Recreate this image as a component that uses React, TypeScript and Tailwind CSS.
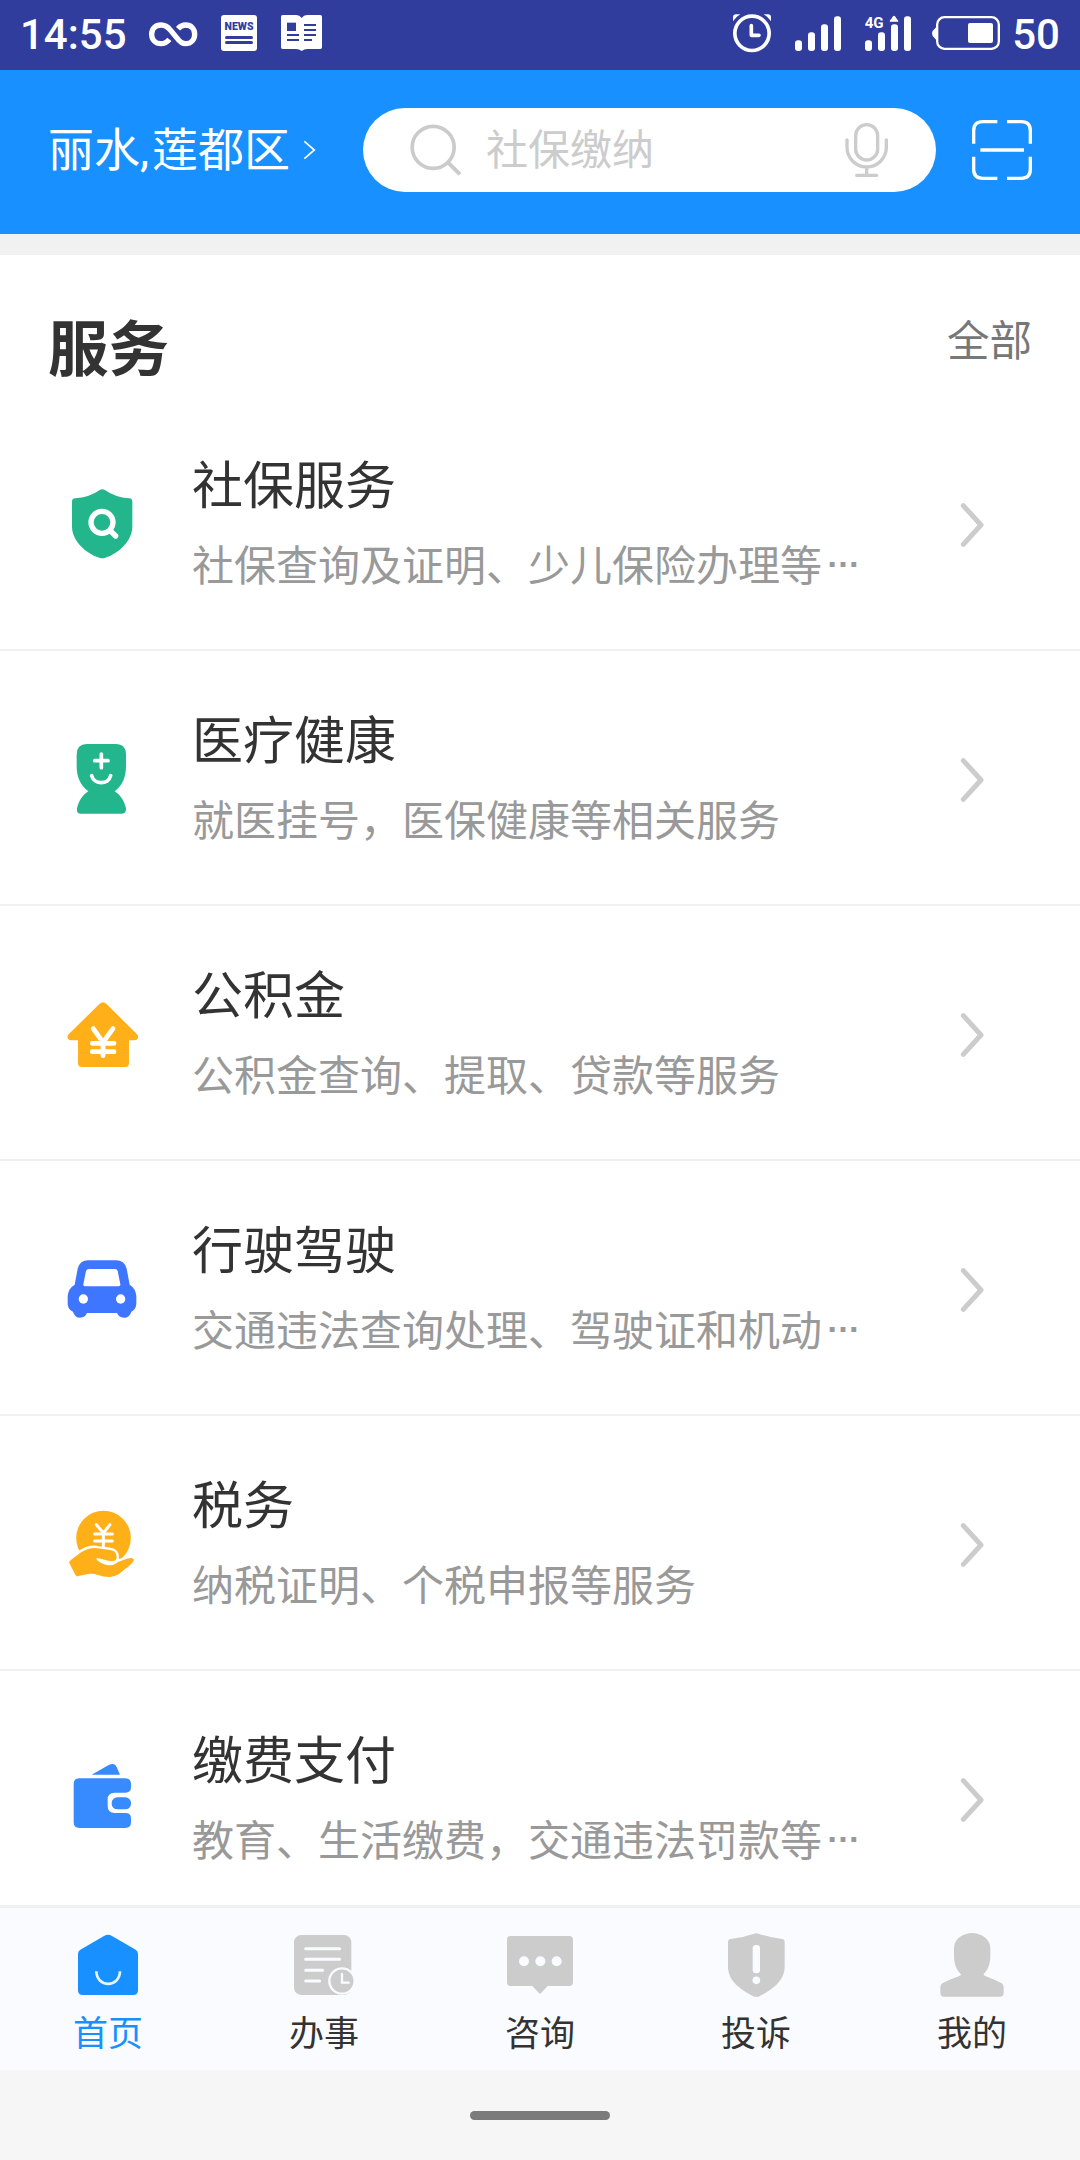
import type { ReactNode } from "react";

const InfinityIcon = () => (
  <svg className="h-[26px] w-[50px]" viewBox="444 62 150 78" fill="none" stroke="#fff" strokeWidth="16">
    <path d="M508 117C500 127 492 130 483 130C466 130 455 118 455 101.500C455 85 467 74 483 74C496 74 504 80 512 90L531 113C538 123 546 130 557 130C573 130 584 118 584 101.500C584 85 573 74 557 74C548 74 540 78 534 85" />
  </svg>
);

const NewsIcon = () => (
  <span className="flex h-9 w-9 flex-col items-center rounded-[3px] bg-white pt-[6px]">
    <span className="font-[Roboto] text-[10.5px] leading-[11px] font-black text-[#303d9d]">NEWS</span>
    <span className="mt-[4px] h-[3px] w-7 rounded-full bg-[#303d9d]" />
    <span className="mt-[2px] h-[3px] w-7 rounded-full bg-[#303d9d]" />
  </span>
);

const BookIcon = () => (
  <svg className="h-9 w-[41px]" viewBox="843 45 123 108">
    <path fill="#fff" d="M848 45H889Q899 45 905 54Q911 45 921 45H961Q966 45 966 50V142Q966 147 961 147H922Q912 147 905 153Q898 147 888 147H848Q843 147 843 142V50Q843 45 848 45Z" />
    <path fill="#303d9d" d="M861 68h27v25h-27z" />
    <path stroke="#303d9d" strokeWidth="6" d="M861 105H897M861 120H897M912 75H948M912 90H948M912 105H948M912 120H936" />
  </svg>
);

const AlarmIcon = () => (
  <svg className="h-[39px] w-10" viewBox="96 41 120 117" fill="none" stroke="#fff">
    <circle cx="156" cy="99" r="51.500" strokeWidth="11" />
    <path strokeWidth="11" strokeLinecap="round" strokeLinejoin="round" d="M154 76V105H177" />
    <path fill="#fff" stroke="none" d="M99 63V51Q99 42 108 42H121Q107 50 99 63ZM213 63V51Q213 42 204 42H191Q205 50 213 63Z" />
  </svg>
);

const SignalIcon = () => (
  <svg className="h-[36px] w-[46px]" viewBox="285 43 138 108" fill="#fff">
    <rect x="285" y="119" width="21" height="32" rx="9" />
    <rect x="324" y="95" width="21" height="56" rx="9" />
    <rect x="363" y="71" width="21" height="80" rx="9" />
    <rect x="402" y="47" width="21" height="104" rx="9" />
  </svg>
);

const Signal4GIcon = () => (
  <svg className="h-[36px] w-[46px]" viewBox="495 43 138 108" fill="#fff">
    <rect x="495" y="119" width="21" height="32" rx="9" />
    <rect x="534" y="95" width="21" height="56" rx="9" />
    <rect x="573" y="71" width="21" height="80" rx="9" />
    <rect x="612" y="47" width="21" height="104" rx="9" />
    <path d="M569 63Q569 59 573 56L579 47Q582 43 585 47L591 56Q595 59 595 63Z" />
    <text x="494" y="83" fontFamily="Roboto" fontWeight="700" fontSize="46" textLength="57" lengthAdjust="spacingAndGlyphs">4G</text>
  </svg>
);

const BatteryIcon = () => (
  <svg className="h-[34px] w-[68px]" viewBox="696 48 204 102">
    <rect x="711.500" y="51.500" width="185" height="95" rx="22" fill="none" stroke="#fff" strokeWidth="7" />
    <rect x="804" y="69" width="75" height="60" rx="6" fill="#fff" />
    <path fill="#fff" d="M711 81V120Q706 119 703 113Q696 108 696 100Q696 92 703 88Q706 82 711 81Z" />
  </svg>
);

const SearchIcon = () => (
  <svg className="h-[52px] w-[52px]" viewBox="181 99 156 156" fill="none" stroke="#cbcbcb" strokeWidth="11">
    <circle cx="250.500" cy="169" r="63" />
    <path strokeWidth="12" d="M295 214L331 250" />
  </svg>
);

const MicIcon = () => (
  <svg className="h-[54px] w-[43px]" viewBox="435 369 129 162" fill="none" stroke="#ccc" strokeWidth="10">
    <rect x="467" y="374" width="66" height="106" rx="33" />
    <path strokeLinecap="round" d="M441 420V442A59 59 0 0 0 559 442V420M500 502V525M470 526H530" />
  </svg>
);

const ScanIcon = () => (
  <svg className="h-[60px] w-[60px]" viewBox="816 360 180 180" fill="none" stroke="#fff" strokeWidth="10">
    <path d="M892 365H848Q821 365 821 392V431M921 365H964Q991 365 991 392V431M821 470V508Q821 535 848 535H892M991 470V508Q991 535 964 535H921M841 450H972" />
  </svg>
);

const ShieldSearch = () => (
  <svg className="size-21" viewBox="180 576 252 252">
    <path fill="#23b68c" d="M298 601Q307 595 316 601Q345 622 388 625Q397 626 397 635V710C397 750 359 789 316 803Q307 807 298 803C255 789 216 750 216 710V635Q216 626 225 625Q269 622 298 601Z" />
    <circle cx="306" cy="697" r="33" fill="none" stroke="#fff" strokeWidth="16" />
    <path stroke="#fff" strokeWidth="16" strokeLinecap="round" d="M333 724L347 738" />
  </svg>
);

const HealthFigure = () => (
  <svg className="size-21" viewBox="60 51 252 252">
    <path fill="#23b68c" d="M140 72H227Q258 72 258 104V138C258 172 247 196 224 214C241 224 253 243 258 265Q259 281 246 281H122Q109 281 111 265C116 243 128 224 145 214C122 196 110 172 110 138V104Q110 72 140 72Z" />
    <path fill="none" stroke="#fff" strokeWidth="11" strokeLinecap="round" d="M184 102V143M164 122H204M155 167C163 195 205 195 212 167" />
  </svg>
);

const HouseYuan = () => (
  <svg className="size-21" viewBox="60 816 252 252">
    <path fill="#ffb019" d="M179 851Q189 842 199 851L291 943Q297 950 293 956Q290 961 282 961H267V1029Q267 1041 255 1041H126Q114 1041 114 1029V961H96Q87 961 84 956Q80 950 86 943Z" />
    <path fill="none" stroke="#fff" strokeWidth="14.500" strokeLinecap="round" strokeLinejoin="round" d="M160 926L189 967L219 926M157 970H222M157 995H222M189 967V1007" />
  </svg>
);

const CarIcon = () => (
  <svg className="size-21" viewBox="60 81 252 252">
    <path fill="#3f76ff" d="M144 121H228Q253 121 260 146L269 194Q287 205 289 229V252Q287 270 274 275Q269 293 252 293Q237 293 231 279H141Q136 293 120 293Q104 293 99 275Q85 270 83 252V229Q85 205 104 194L113 146Q120 121 144 121Z" />
    <path fill="#fff" d="M147 147H225Q231 147 233 153L241 193Q242 199 236 199H135Q129 199 130 193L138 153Q140 147 147 147Z" />
    <circle cx="130" cy="237" r="14" fill="#fff" />
    <circle cx="242" cy="237" r="14" fill="#fff" />
  </svg>
);

const HandYuan = () => (
  <svg className="size-21" viewBox="60 846 252 252">
    <circle cx="190.500" cy="954" r="82" fill="#ffb019" />
    <path fill="none" stroke="#fff" strokeWidth="9" strokeLinecap="round" strokeLinejoin="round" d="M169 914L190 939L210 914M164 942H217M164 963H217M190 939V985" />
    <path fill="#ffb019" stroke="#fff" strokeWidth="7" strokeLinejoin="round" d="M83 1027C88 1015 100 1009 112 1001C130 986 150 978 170 981C195 988 236 978 233 1014C233 1018 231 1021 229 1023C246 1021 258 1009 277 1011Q288 1014 284 1024C278 1037 266 1044 253 1053C227 1078 203 1078 172 1068C150 1061 134 1067 111 1073Q105 1072 102 1064Z" />
    <path fill="#fff" d="M171 1014C187 1017 203 1024 218 1023C230 1022 232 1018 233 1008L240 1019C231 1030 216 1039 201 1035C188 1032 179 1028 171 1020Q167 1015 171 1014Z" />
  </svg>
);

const WalletIcon = () => (
  <svg className="size-21" viewBox="60 51 252 252">
    <path fill="#388bff" d="M155 104L206 75Q223 66 230 81L240 104ZM118 115H256Q273 115 273 132V142Q273 158 256 158H224Q203 158 203 178V199Q203 219 224 219H256Q273 219 273 235V247Q273 264 256 264H118Q101 264 101 247V132Q101 115 118 115Z" />
    <rect x="215" y="172" width="58" height="36" rx="17" fill="#388bff" />
  </svg>
);

const HomeTab = () => (
  <svg className="size-18" viewBox="216 120 216 216">
    <path fill="#1890ff" d="M312 138Q324 131 336 138L407 179Q414 183 414 192V301Q414 315 400 315H248Q234 315 234 301V192Q234 183 241 179Z" />
    <path fill="none" stroke="#fff" strokeOpacity=".9" strokeWidth="8" d="M289 244C290 294 359 294 360 244" />
  </svg>
);

const TasksTab = () => (
  <svg className="size-18" viewBox="864 120 216 216">
    <rect x="882" y="135" width="172" height="180" rx="22" fill="#ccc" />
    <path stroke="#fafbff" strokeWidth="9" strokeLinecap="round" d="M917 176H1019M917 208H1019M917 241H968M917 273H959" />
    <circle cx="1026" cy="273" r="38" fill="#ccc" stroke="#fafbff" strokeWidth="7" />
    <path fill="none" stroke="#fafbff" strokeWidth="7" strokeLinecap="round" d="M1026 252V278H1046" />
  </svg>
);

const ChatTab = () => (
  <svg className="size-18" viewBox="312 120 216 216">
    <path fill="#ccc" d="M332 138H508Q519 138 519 149V277Q519 288 508 288H443L424 308Q420 313 416 308L397 288H332Q321 288 321 277V149Q321 138 332 138Z" />
    <g fill="#fafbff">
      <circle cx="372" cy="214" r="15" />
      <circle cx="421" cy="214" r="15" />
      <circle cx="470" cy="214" r="15" />
    </g>
  </svg>
);

const ComplainTab = () => (
  <svg className="size-18" viewBox="120 120 216 216">
    <path fill="#ccc" d="M222 131Q229 129 236 131Q267 142 306 147Q314 148 314 156V230C314 272 277 298 241 317Q229 324 217 317C181 298 144 272 144 230V156Q144 148 152 147Q191 142 222 131Z" />
    <rect x="218" y="165" width="22" height="85" rx="10" fill="#fafbff" />
    <circle cx="229" cy="271" r="11.500" fill="#fafbff" />
  </svg>
);

const ProfileTab = () => (
  <svg className="size-18" viewBox="768 120 216 216">
    <path fill="#ccc" d="M876 129C898 129 931 144 931 174V199C931 221 924 240 910 254C925 264 951 270 965 280Q971 284 971 291V309Q971 320 960 320H792Q781 320 781 309V291Q781 284 787 280C801 270 829 264 844 254C829 240 822 221 822 199V174C822 144 854 129 876 129Z" />
  </svg>
);

type Service = { title: string; desc: string; truncated?: boolean; icon: ReactNode };

const services: Service[] = [
  { title: "社保服务", desc: "社保查询及证明、少儿保险办理等", truncated: true, icon: <ShieldSearch /> },
  { title: "医疗健康", desc: "就医挂号，医保健康等相关服务", icon: <HealthFigure /> },
  { title: "公积金", desc: "公积金查询、提取、贷款等服务", icon: <HouseYuan /> },
  { title: "行驶驾驶", desc: "交通违法查询处理、驾驶证和机动", truncated: true, icon: <CarIcon /> },
  { title: "税务", desc: "纳税证明、个税申报等服务", icon: <HandYuan /> },
  { title: "缴费支付", desc: "教育、生活缴费，交通违法罚款等", truncated: true, icon: <WalletIcon /> },
];

const tabs: { label: string; icon: ReactNode; active?: boolean }[] = [
  { label: "首页", icon: <HomeTab />, active: true },
  { label: "办事", icon: <TasksTab /> },
  { label: "咨询", icon: <ChatTab /> },
  { label: "投诉", icon: <ComplainTab /> },
  { label: "我的", icon: <ProfileTab /> },
];

function StatusBar() {
  return (
    <div className="flex h-[70px] shrink-0 items-center bg-[#303d9d] pr-5 pl-5 font-[Roboto] text-[42px] leading-[50px] font-medium text-white">
      <span className="w-[128px]">14:55</span>
      <span className="pb-[2px]"><InfinityIcon /></span>
      <span className="ml-[23px] flex items-center gap-6 pb-[4px]">
        <NewsIcon />
        <BookIcon />
      </span>
      <span className="ml-auto flex items-center">
        <span className="pb-1"><AlarmIcon /></span>
        <span className="ml-[23px] flex items-center gap-6 pb-[5px]">
          <SignalIcon />
          <Signal4GIcon />
        </span>
        <span className="ml-[21px] pb-1"><BatteryIcon /></span>
        <span className="ml-[12px]">50</span>
      </span>
    </div>
  );
}

function Header() {
  return (
    <header className="flex h-[164px] shrink-0 items-center bg-[#1890ff] pr-12 pl-12">
      <div className="flex w-[315px] items-center text-white">
        <span className="pb-2 text-[46px] leading-[60px] font-normal whitespace-nowrap">丽水<span className="mr-[3px] font-[Roboto]">,</span>莲都区</span>
        <svg className="mt-[-4px] ml-[13px] h-5 w-[13px] shrink-0" viewBox="908 420 39 60" fill="none" stroke="#fff" strokeWidth="5">
          <path d="M912 424L942 450L912 476" />
        </svg>
      </div>
      <div className="mt-[-4px] flex h-21 w-[573px] items-center rounded-full bg-white pr-12 pl-[47px]">
        <SearchIcon />
        <span className="ml-6 grow pb-[6px] text-[42px] leading-[60px] font-normal text-[#ccc]">社保缴纳</span>
        <MicIcon />
      </div>
      <div className="mt-[-4px] ml-9"><ScanIcon /></div>
    </header>
  );
}

function ServiceRow({ title, desc, truncated, icon }: Service) {
  return (
    <li className="flex h-[255px] shrink-0 items-start border-b-2 border-[#f0f0f0] pl-[60px]">
      <div className="mt-[86px]">{icon}</div>
      <div className="mt-[56px] ml-12 grow">
        <h3 className="text-[51px] leading-[60px] font-normal text-[#333]">{title}</h3>
        <p className="mt-[21px] text-[42px] leading-[60px] font-normal whitespace-nowrap text-[#999]">
          {desc}
          {truncated && <span className="relative -top-[14px] ml-1 font-['Liberation_Sans'] text-[34px] leading-none font-bold">…</span>}
        </p>
      </div>
      <svg className="mt-[107px] mr-24 h-11 w-6" viewBox="782 608 72 132" fill="none" stroke="#ccc" strokeWidth="15" strokeLinecap="round" strokeLinejoin="round">
        <path d="M792 616L845 674L792 732" />
      </svg>
    </li>
  );
}

export default function App() {
  return (
    <div className="flex h-[2160px] w-[1080px] flex-col overflow-hidden bg-white font-['Noto_Sans_CJK_SC',sans-serif]">
      <StatusBar />
      <Header />
      <div className="h-[21px] shrink-0 bg-[#f1f1f1]" />
      <main className="h-[1650px] shrink-0 overflow-hidden">
        <div className="flex h-[141px] items-start justify-between px-12">
          <h2 className="mt-[54px] text-[60.5px] leading-[72px] font-bold text-[#333]">服务</h2>
          <a className="mt-[53px] text-[42.5px] leading-[60px] font-normal text-[#777]">全部</a>
        </div>
        <ul className="flex flex-col">
          {services.map((service) => (
            <ServiceRow key={service.title} {...service} />
          ))}
        </ul>
      </main>
      <nav className="grid h-[165px] shrink-0 grid-cols-5 border-t-3 border-[#eff1f1] bg-[#fafbff]">
        {tabs.map((tab) => (
          <div key={tab.label} className="flex flex-col items-center pt-[22px]">
            {tab.icon}
            <span className={tab.active ? "mt-[6px] text-[35px] leading-[46px] font-normal text-[#1890ff]" : "mt-[6px] text-[35px] leading-[46px] font-normal text-[#333]"}>
              {tab.label}
            </span>
          </div>
        ))}
      </nav>
      <div className="flex h-[90px] shrink-0 justify-center bg-[#f6f6f6] pt-[41px]">
        <span className="h-[9px] w-[140px] rounded-full bg-[#7b7b7b]" />
      </div>
    </div>
  );
}
